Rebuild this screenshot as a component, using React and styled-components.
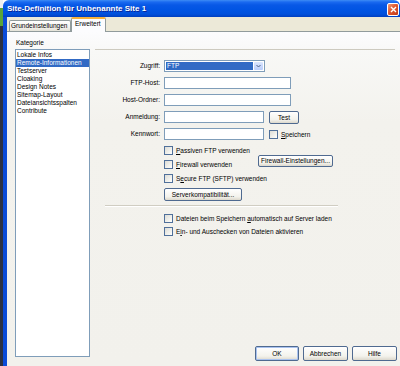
import React from "react";
import styled, { createGlobalStyle } from "styled-components";

const GlobalStyle = createGlobalStyle`
  html, body {
    margin: 0;
    padding: 0;
    overflow: hidden;
    font-family: "Liberation Sans", Arial, sans-serif;
  }
`;

const Screen = styled.div`
  width: 400px;
  height: 366px;
  display: flex;
  overflow: hidden;
`;

const DesktopEdge = styled.div`
  width: 3px;
  flex-shrink: 0;
  background: linear-gradient(
    to bottom,
    #eef0f0 0 8px,
    #5aa53a 8px 26px,
    #2c3142 26px
  );
`;

const Window = styled.div`
  flex: 1;
  display: flex;
  flex-direction: column;
  min-width: 0;
`;

const TitleBar = styled.div`
  height: 17px;
  flex-shrink: 0;
  display: flex;
  justify-content: space-between;
  padding: 0 1px 0 4px;
  border-radius: 6px 6px 0 0;
  background: linear-gradient(
    to bottom,
    #3d8cf5 0px,
    #1a6af0 2px,
    #0858e6 5px,
    #0054e3 10px,
    #0050dc 14px,
    #003fbf 17px
  );
`;

const Title = styled.span`
  color: #fff;
  font-size: 8px;
  font-weight: bold;
  line-height: 17px;
  white-space: nowrap;
  text-shadow: 1px 1px 0 #0a2596;
`;

const CloseButton = styled.div`
  width: 10px;
  height: 11px;
  margin-top: 3px;
  border: 1px solid #fff;
  border-radius: 2px;
  background: linear-gradient(135deg, #ef9a7a 0%, #e0592f 45%, #c13a18 100%);
  display: flex;
  align-items: center;
  justify-content: center;
`;

const Frame = styled.div`
  flex: 1;
  display: flex;
  flex-direction: column;
  border-left: 4px solid #0a4bd8;
  background: #ece9d8;
  min-height: 0;
`;

const TabStrip = styled.div`
  height: 14px;
  flex-shrink: 0;
  display: flex;
  align-items: flex-end;
  padding-left: 2px;
`;

const Tab = styled.div`
  position: relative;
  z-index: ${(p) => (p.$active ? 2 : 1)};
  width: ${(p) => p.$w}px;
  height: ${(p) => (p.$active ? 15 : 11)}px;
  margin-bottom: ${(p) => (p.$active ? -1 : 0)}px;
  box-sizing: border-box;
  border: 1px solid #919b9c;
  border-bottom: none;
  border-top: ${(p) => (p.$active ? "2px solid #f5b23d" : "1px solid #919b9c")};
  border-radius: 2px 2px 0 0;
  background: ${(p) =>
    p.$active ? "#fcfcfe" : "linear-gradient(#ffffff, #f0efe9 70%, #e4e2d8)"};
  font-size: 6.5px;
  line-height: ${(p) => (p.$active ? 10 : 9)}px;
  padding-left: ${(p) => (p.$active ? 3 : 1)}px;
  white-space: nowrap;
  color: #000;
`;

const Page = styled.div`
  flex: 1;
  min-height: 0;
  border-top: 1px solid #919b9c;
  background: linear-gradient(to bottom, #fcfcfe 0px, #f8f8f6 20px, #f3f2ed 90px, #f2f1ec);
  display: grid;
  grid-template-columns: 75px 1fr;
  column-gap: 5px;
  padding-left: 8px;
  overflow: hidden;
`;

const Sidebar = styled.div`
  display: flex;
  flex-direction: column;
`;

const Caption = styled.div`
  height: 17px;
  box-sizing: border-box;
  padding: 7px 0 0 1px;
  font-size: 6.5px;
  line-height: 8px;
`;

const ListBox = styled.div`
  height: 308px;
  box-sizing: border-box;
  border: 1px solid #7f9db9;
  background: #fff;
  padding-top: 1px;
`;

const ListItem = styled.div`
  height: 8px;
  line-height: 8px;
  font-size: 6.5px;
  padding-left: 1px;
  white-space: nowrap;
  color: ${(p) => (p.$selected ? "#fff" : "#000")};
  background: ${(p) => (p.$selected ? "#316ac5" : "transparent")};
`;

const Main = styled.div`
  display: flex;
  flex-direction: column;
  padding-right: 3px;
  min-width: 0;
`;

const Rule = styled.div`
  margin: 17px 2px 0 0;
  height: 1px;
  background: #cdcabf;
`;

const FieldGrid = styled.div`
  margin-top: 10px;
  display: grid;
  grid-template-columns: 65px 1fr;
  grid-auto-rows: 12px;
  column-gap: 4px;
  row-gap: 5px;
`;

const Label = styled.div`
  text-align: right;
  font-size: 6.5px;
  line-height: 12px;
  white-space: nowrap;
`;

const Control = styled.div`
  display: flex;
  align-items: flex-start;
  gap: 5px;
`;

const Input = styled.div`
  width: ${(p) => p.$w}px;
  height: 12px;
  box-sizing: border-box;
  border: 1px solid #7f9db9;
  background: #fff;
`;

const Select = styled.div`
  width: 101px;
  height: 12px;
  box-sizing: border-box;
  border: 1px solid #7f9db9;
  background: #fff;
  display: flex;
  padding: 1px;
`;

const SelectValue = styled.div`
  flex: 1;
  background: #316ac5;
  color: #fff;
  font-size: 6.5px;
  line-height: 8px;
  padding-left: 1px;
`;

const SelectArrow = styled.div`
  width: 9px;
  margin-left: 1px;
  background: linear-gradient(#dbe6fe, #b9cdfb);
  border-radius: 1px;
  display: flex;
  align-items: center;
  justify-content: center;
`;

const Button = styled.div`
  width: ${(p) => p.$w}px;
  height: ${(p) => p.$h || 13}px;
  margin-top: ${(p) => p.$mt || 0}px;
  flex-shrink: 0;
  box-sizing: border-box;
  border: 1px solid #4f6a90;
  border-radius: 2px;
  background: linear-gradient(#ffffff, #f3f2ec 70%, #dcd8cc);
  box-shadow: ${(p) => (p.$default ? "inset 0 0 0 1px #a9c2ef" : "none")};
  font-size: 6.5px;
  line-height: ${(p) => (p.$h || 13) - 2}px;
  text-align: center;
  white-space: nowrap;
  color: #000;
`;

const Options = styled.div`
  margin: ${(p) => p.$mt}px 0 0 69px;
  display: flex;
  flex-direction: column;
  align-items: flex-start;
`;

const CheckRow = styled.label`
  height: ${(p) => p.$h || 14}px;
  display: flex;
  align-items: center;
  gap: 3px;
  font-size: 6.5px;
  white-space: nowrap;
`;

const FirewallRow = styled.div`
  display: grid;
  grid-template-columns: 94px auto;
  align-items: start;
`;

const Box = styled.span`
  width: 9px;
  height: 9px;
  box-sizing: border-box;
  flex-shrink: 0;
  border: 1px solid #50709a;
  background: linear-gradient(135deg, #dcdcd6, #f4f4f0 70%, #ffffff);
`;

const Separator = styled.div`
  margin: 4px 0 0 10px;
  width: 233px;
  height: 1px;
  background: #d0cdc2;
  border-bottom: 1px solid #fff;
`;

const Footer = styled.div`
  margin-top: auto;
  margin-bottom: 5px;
  display: flex;
  justify-content: flex-end;
  gap: 4px;
`;

const categories = [
  "Lokale Infos",
  "Remote-Informationen",
  "Testserver",
  "Cloaking",
  "Design Notes",
  "Sitemap-Layout",
  "Dateiansichtsspalten",
  "Contribute",
];

function Check({ children, h }) {
  return (
    <CheckRow $h={h}>
      <Box />
      <span>{children}</span>
    </CheckRow>
  );
}

export default function App() {
  return (
    <>
      <GlobalStyle />
      <Screen>
        <DesktopEdge />
        <Window>
          <TitleBar>
            <Title>Site-Definition für Unbenannte Site 1</Title>
            <CloseButton>
              <svg width="7" height="7" viewBox="0 0 7 7">
                <path d="M1 1L6 6M6 1L1 6" stroke="#fff" strokeWidth="1.4" />
              </svg>
            </CloseButton>
          </TitleBar>
          <Frame>
            <TabStrip>
              <Tab $w={62}>Grundeinstellungen</Tab>
              <Tab $w={35} $active>
                Erweitert
              </Tab>
            </TabStrip>
            <Page>
              <Sidebar>
                <Caption>Kategorie</Caption>
                <ListBox>
                  {categories.map((c, i) => (
                    <ListItem key={c} $selected={i === 1}>
                      {c}
                    </ListItem>
                  ))}
                </ListBox>
              </Sidebar>
              <Main>
                <Rule />
                <FieldGrid>
                  <Label>Zugriff:</Label>
                  <Control>
                    <Select>
                      <SelectValue>FTP</SelectValue>
                      <SelectArrow>
                        <svg width="5" height="4" viewBox="0 0 5 4">
                          <path d="M0.5 1L2.5 3L4.5 1" fill="none" stroke="#4d6185" strokeWidth="1" />
                        </svg>
                      </SelectArrow>
                    </Select>
                  </Control>
                  <Label>FTP-Host:</Label>
                  <Control>
                    <Input $w={127} />
                  </Control>
                  <Label>Host-Ordner:</Label>
                  <Control>
                    <Input $w={127} />
                  </Control>
                  <Label>Anmeldung:</Label>
                  <Control>
                    <Input $w={100} />
                    <Button $w={30}>Test</Button>
                  </Control>
                  <Label>Kennwort:</Label>
                  <Control>
                    <Input $w={100} />
                    <Check h={12}>
                      <u>S</u>peichern
                    </Check>
                  </Control>
                </FieldGrid>
                <Options $mt={3}>
                  <Check>
                    <u>P</u>assiven FTP verwenden
                  </Check>
                  <FirewallRow>
                    <Check>
                      <u>F</u>irewall verwenden
                    </Check>
                    <Button $w={75} $h={12} $mt={-2}>
                      Firewall-Einstellungen...
                    </Button>
                  </FirewallRow>
                  <Check>
                    S<u>e</u>cure FTP (SFTP) verwenden
                  </Check>
                  <Button $w={78} $mt={3}>
                    Serverkompatibilität...
                  </Button>
                </Options>
                <Separator />
                <Options $mt={5}>
                  <Check h={13}>
                    Dateien beim Speichern <u>a</u>utomatisch auf Server laden
                  </Check>
                  <Check h={13}>
                    E<u>i</u>n- und Auschecken von Dateien aktivieren
                  </Check>
                </Options>
                <Footer>
                  <Button $w={44} $h={15} $default>
                    OK
                  </Button>
                  <Button $w={45} $h={15}>
                    Abbrechen
                  </Button>
                  <Button $w={45} $h={15}>
                    Hilfe
                  </Button>
                </Footer>
              </Main>
            </Page>
          </Frame>
        </Window>
      </Screen>
    </>
  );
}
